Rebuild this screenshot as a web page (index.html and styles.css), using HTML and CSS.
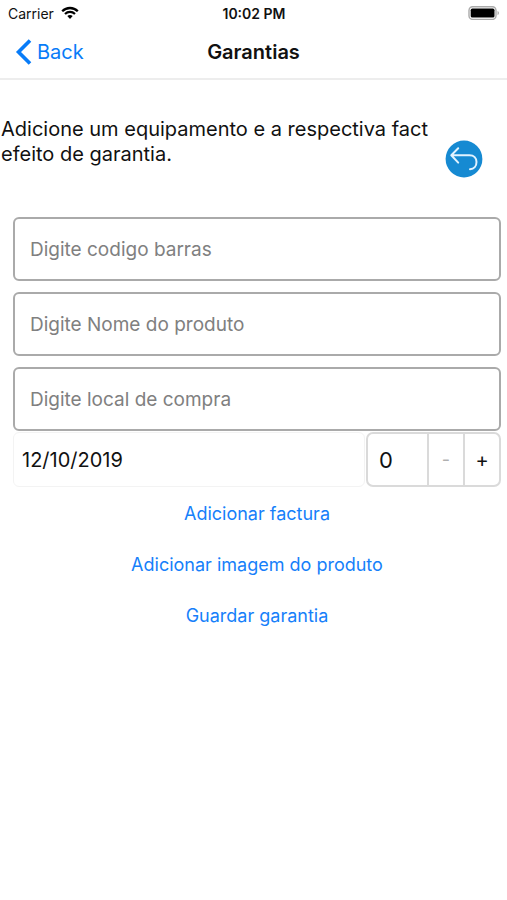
FILE: index.html
```html
<!DOCTYPE html>
<html lang="pt">
<head>
<meta charset="utf-8">
<meta name="viewport" content="width=device-width, initial-scale=1">
<title>Garantias</title>
<link rel="stylesheet" href="styles.css">
</head>
<body>
<div class="status">
  <div class="carrier">
    <span>Carrier</span>
    <svg width="18" height="14" viewBox="0 0 18 14" aria-hidden="true">
      <path d="M1.2 5.2C5.6 .9 12.4 .9 16.8 5.2" fill="none" stroke="#000" stroke-width="2.3"/>
      <path d="M4 8C6.9 5.2 11.1 5.2 14 8" fill="none" stroke="#000" stroke-width="2.2"/>
      <path d="M6.3 10.1C7.9 8.7 10.1 8.7 11.7 10.1L9 12.9Z"/>
    </svg>
  </div>
  <span class="clock">10:02 PM</span>
  <svg class="battery" width="32" height="14" viewBox="0 0 32 14" aria-hidden="true">
    <rect x="1" y=".8" width="27" height="12.6" rx="3.6" fill="#fff" stroke="#aaa" stroke-width="1.4"/>
    <rect x="2.7" y="2.6" width="23.8" height="9" rx="1.6"/>
    <path d="M29.6 5C31.2 5.7 31.2 8.5 29.6 9.2Z" fill="#999"/>
  </svg>
</div>
<header class="nav">
  <a class="back" href="#">
    <svg width="17" height="28" viewBox="0 0 17 28" aria-hidden="true"><path d="M15 2.5L3.5 14L15 25.5" fill="none" stroke="currentColor" stroke-width="3.6"/></svg>
    <span>Back</span>
  </a>
  <h1>Garantias</h1>
</header>
<main>
  <div class="intro">
    <p>Adicione um equipamento e a respectiva fact<br>efeito de garantia.</p>
    <button class="undo" type="button" aria-label="Voltar">
      <svg width="38" height="38" viewBox="0 0 38 38" aria-hidden="true">
        <circle cx="19" cy="19" r="18.4" fill="#168ad2"/>
        <path d="M13.2 8.3L6.3 15.2L13.2 22.6M6.8 15.2H24.5C29 15.2 31.5 18.2 31.5 22C31.5 26 29 29 25 29.2" fill="none" stroke="#e2f3ff" stroke-width="2" stroke-linecap="round" stroke-linejoin="round"/>
      </svg>
    </button>
  </div>
  <form class="form">
    <input class="field" type="text" placeholder="Digite codigo barras" aria-label="Codigo barras">
    <input class="field" type="text" placeholder="Digite Nome do produto" aria-label="Nome do produto">
    <input class="field" type="text" placeholder="Digite local de compra" aria-label="Local de compra">
    <div class="row">
      <input class="date" type="text" value="12/10/2019" aria-label="Data de compra">
      <div class="stepper">
        <input type="text" inputmode="numeric" value="0" aria-label="Anos de garantia">
        <button class="minus" type="button" disabled>-</button>
        <button type="button">+</button>
      </div>
    </div>
  </form>
  <div class="actions">
    <button type="button">Adicionar factura</button>
    <button type="button">Adicionar imagem do produto</button>
    <button type="button">Guardar garantia</button>
  </div>
</main>
</body>
</html>
```
FILE: styles.css
```css
* { box-sizing: border-box; }
body { margin: 0; background: #fff; color: #111; font-family: Inter, sans-serif; }
button, input { margin: 0; padding: 0; border: 0; background: none; color: inherit; font: inherit; }
svg { display: block; }

.status, .nav { display: grid; grid-template-columns: 1fr auto 1fr; align-items: center; }
.status { height: 26px; padding: 0 7px 0 8px; font-size: 14px; }
.carrier { display: flex; align-items: center; gap: 7px; }
.clock { font-weight: 600; }
.battery { justify-self: end; }

.nav { height: 54px; padding: 0 15px; border-bottom: 2px solid #ededed; }
.back { display: flex; align-items: center; gap: 5px; color: #087cf8; font-size: 20px; text-decoration: none; }
h1 { margin: 0; font-size: 20px; font-weight: 600; }

.intro { display: flex; justify-content: space-between; padding: 37px 24px 38px 1px; }
.intro p { margin: 0; font-size: 20px; line-height: 25px; white-space: nowrap; }
.undo { align-self: flex-end; margin-top: 23px; }

.form { display: flex; flex-direction: column; gap: 11px; padding: 1px 6px 0 13px; }
.field { width: 100%; height: 64px; padding: 0 15px; border: 2px solid #aaa; border-radius: 6px; font-size: 19px; }
.field::placeholder { color: #808080; opacity: 1; }
.row { display: flex; gap: 1px; height: 55px; margin-top: -10px; font-size: 20px; }
.date { flex: 1; min-width: 0; padding: 0 8px; border: 1px solid #f3f3f3; border-radius: 6px; }
.stepper { display: flex; width: 135px; border: 2px solid #dadada; border-radius: 7px; }
.stepper input { flex: 1; min-width: 0; padding: 0 11px; font-size: 22px; }
.stepper button { width: 36px; border-left: 2px solid #dadada; }
.stepper .minus { color: #b0b0b0; font-size: 18px; }

.actions { display: flex; flex-direction: column; align-items: center; gap: 21px; padding: 12px 6px 0 13px; color: #167ffa; font-size: 18px; line-height: 30px; }
```
